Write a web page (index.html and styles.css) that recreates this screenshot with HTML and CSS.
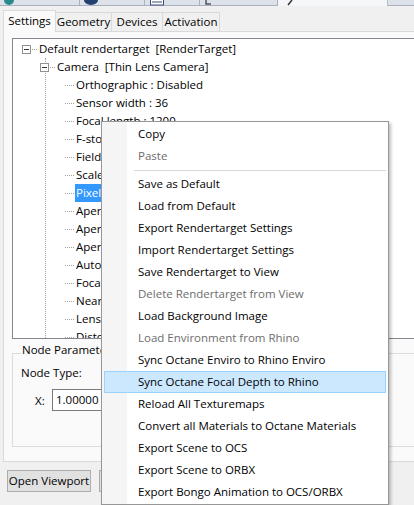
FILE: index.html
```html
<!DOCTYPE html>
<html>
<head>
<meta charset="utf-8">
<link rel="stylesheet" href="styles.css">
</head>
<body>
<div class="app">
  <div class="topstrip">
    <div class="ptab p1"><svg width="10" height="6" viewBox="0 0 10 6"><circle cx="5" cy="0" r="5" fill="#2a8a8a"/></svg></div>
    <div class="ptab p2"><svg width="14" height="6" viewBox="0 0 14 6"><ellipse cx="7" cy="0" rx="7" ry="5" fill="#23406e"/></svg></div>
    <div class="ptab p3"><svg width="14" height="6" viewBox="0 0 14 6"><rect x="0.5" y="-2" width="13" height="7" fill="#fff" stroke="#3a4d7a"/><line x1="2" y1="2" x2="12" y2="2" stroke="#3a4d7a"/></svg></div>
    <div class="ptab p4"><svg width="10" height="6" viewBox="0 0 10 6"><path d="M2 0 L2 4 L7 4" fill="none" stroke="#555" stroke-width="1.5"/></svg></div>
    <div class="ptab active"><svg width="10" height="6" viewBox="0 0 10 6"><path d="M2 5 L6 0" stroke="#333" stroke-width="1.5"/></svg></div>
    <div class="ptab rest"></div>
  </div>

  <div class="tabs">
    <div class="tab selected t1">Settings</div>
    <div class="tab t2">Geometry</div>
    <div class="tab t3">Devices</div>
    <div class="tab t4">Activation</div>
  </div>

  <div class="panel">
    <div class="tree">
      <div class="row root">
        <span class="exp"></span><span class="hdots d-root"></span><span class="label">Default rendertarget&nbsp; [RenderTarget]</span>
      </div>
      <div class="level1">
        <div class="row">
          <span class="exp exp1"></span><span class="hdots d-cam"></span><span class="label">Camera&nbsp; [Thin Lens Camera]</span>
        </div>
        <div class="row leaf"><span class="hdots d-leaf"></span><span class="label">Orthographic : Disabled</span></div>
        <div class="row leaf"><span class="hdots d-leaf"></span><span class="label">Sensor width : 36</span></div>
        <div class="row leaf"><span class="hdots d-leaf"></span><span class="label">Focal length : 1200</span></div>
        <div class="row leaf"><span class="hdots d-leaf"></span><span class="label">F-stop : 2.8</span></div>
        <div class="row leaf"><span class="hdots d-leaf"></span><span class="label">Field of view : 1.7</span></div>
        <div class="row leaf"><span class="hdots d-leaf"></span><span class="label">Scale of view : 1</span></div>
        <div class="row leaf"><span class="hdots d-leaf"></span><span class="label sel">Pixel aspect ratio : 1</span></div>
        <div class="row leaf"><span class="hdots d-leaf"></span><span class="label">Aperture : 0.5</span></div>
        <div class="row leaf"><span class="hdots d-leaf"></span><span class="label">Aperture edge : 1</span></div>
        <div class="row leaf"><span class="hdots d-leaf"></span><span class="label">Aperture blade count : 6</span></div>
        <div class="row leaf"><span class="hdots d-leaf"></span><span class="label">Autofocus : Enabled</span></div>
        <div class="row leaf"><span class="hdots d-leaf"></span><span class="label">Focal depth : 1.118</span></div>
        <div class="row leaf"><span class="hdots d-leaf"></span><span class="label">Near clip depth : 0</span></div>
        <div class="row leaf"><span class="hdots d-leaf"></span><span class="label">Lens shift : 0, 0</span></div>
        <div class="row leaf"><span class="hdots d-leaf"></span><span class="label">Distortion : 0</span></div>
      </div>
    </div>

    <div class="group">
      <div class="legend">Node Parameters</div>
      <div class="nodetype">Node Type:</div>
      <div class="xrow">
        <span class="xlabel">X:</span>
        <span class="input">1.00000</span>
      </div>
    </div>
  </div>

  <div class="buttons">
    <div class="btn b1">Open Viewport</div>
    <div class="btn b2">Close</div>
  </div>

  <div class="menu">
    <div class="item">Copy</div>
    <div class="item disabled">Paste</div>
    <div class="sep"></div>
    <div class="item">Save as Default</div>
    <div class="item">Load from Default</div>
    <div class="item">Export Rendertarget Settings</div>
    <div class="item">Import Rendertarget Settings</div>
    <div class="item">Save Rendertarget to View</div>
    <div class="item disabled">Delete Rendertarget from View</div>
    <div class="item">Load Background Image</div>
    <div class="item disabled">Load Environment from Rhino</div>
    <div class="item">Sync Octane Enviro to Rhino Enviro</div>
    <div class="item hover">Sync Octane Focal Depth to Rhino</div>
    <div class="item">Reload All Texturemaps</div>
    <div class="item">Convert all Materials to Octane Materials</div>
    <div class="item">Export Scene to OCS</div>
    <div class="item">Export Scene to ORBX</div>
    <div class="item">Export Bongo Animation to OCS/ORBX</div>
  </div>
</div>
</body>
</html>
```

FILE: styles.css
```css
* { box-sizing: border-box; }
html, body { margin: 0; padding: 0; }
body {
  background: #f0f0f0;
  font-family: "Open Sans", "Noto Sans", sans-serif;
  font-size: 11.5px;
  color: #000;
  width: 414px;
  height: 505px;
  overflow: hidden;
}
.app { position: relative; width: 414px; height: 505px; overflow: hidden; }

/* parent tab strip (cut off at top) */
.topstrip { display: flex; height: 6px; }
.ptab {
  height: 6px;
  background: #dce1ea;
  border-right: 1px solid #a9b0bf;
  border-bottom: 1px solid #a9b0bf;
  padding-left: 4px;
  display: flex;
  align-items: flex-start;
}
.ptab svg { display: block; }
.p1 { width: 80px; }
.p2 { width: 65px; }
.p3 { width: 55px; padding-left: 5px; }
.p4 { width: 78px; }
.ptab.active { width: 110px; background: #f5f6f7; border-bottom: none; border-right: 1px solid #b8bcc4; padding-left: 8px; }
.ptab.rest { flex: 1; border-right: none; }

/* settings tabs */
.tabs { display: flex; align-items: flex-end; margin-top: 3px; padding-left: 3px; height: 22px; }
.tab {
  height: 19px;
  border: 1px solid #d9d9d9;
  border-bottom: none;
  background: #f0f0f0;
  margin-left: -1px;
  line-height: 18px;
  text-align: center;
  white-space: nowrap;
}
.tab.selected {
  height: 22px;
  background: #fafafa;
  margin-left: 0;
  margin-bottom: -1px;
  position: relative;
  z-index: 1;
  line-height: 19px;
  border-color: #d9d9d9;
}
.t1 { width: 53px; }
.t2 { width: 57px; }
.t3 { width: 52px; }
.t4 { width: 58px; }

/* tab page */
.panel {
  margin-left: 3px;
  height: 431px;
  border: 1px solid #d9d9d9;
  border-right: none;
  background: #fafafa;
  padding: 6px 0 0 8px;
}
.tree {
  height: 301px;
  border: 1px solid #828790;
  border-right: none;
  background: #fff;
  overflow: hidden;
  padding-top: 1px;
}
.row { display: flex; align-items: center; height: 18px; white-space: nowrap; }
.root { padding-left: 9px; }
.exp {
  width: 9px; height: 9px;
  border: 1px solid #919191;
  background: #fff linear-gradient(#333, #333) no-repeat center / 5px 1px;
  flex: none;
}
.hdots { height: 1px; border-top: 1px dotted #a0a0a0; flex: none; }
.d-root { width: 5px; margin: 0 1px 0 1px; }
.level1 { margin-left: 32px; border-left: 1px dotted #a0a0a0; }
.exp1 { margin-left: -6px; }
.d-cam { width: 5px; margin: 0 1px 0 1px; }
.leaf { padding-left: 19px; }
.d-leaf { width: 9px; margin-right: 1px; }
.label { line-height: 18px; padding: 0 1px; }
.label.sel { background: #3399ff; color: #fff; }

/* group box */
.group {
  margin-top: 14px;
  height: 94px;
  border: 1px solid #dcdcdc;
  border-right: none;
  padding-left: 8px;
}
.legend {
  width: max-content;
  margin-top: -12px;
  background: #fafafa;
  padding: 0 1px;
  line-height: 16px;
}
.nodetype { line-height: 16px; margin-top: 7px; }
.xrow { display: flex; align-items: center; margin-top: 8px; padding-left: 14px; }
.xlabel { width: 17px; }
.input {
  display: block;
  width: 120px;
  height: 22px;
  border: 1px solid #7a7a7a;
  background: #fff;
  line-height: 20px;
  padding-left: 3px;
}

/* bottom buttons */
.buttons { display: flex; gap: 8px; padding: 8px 0 0 7px; }
.btn {
  height: 22px;
  border: 1px solid #adadad;
  background: #e1e1e1;
  line-height: 20px;
  text-align: center;
}
.b1 { width: 84px; }
.b2 { width: 80px; }

/* context menu overlay */
.menu {
  position: absolute;
  left: 101px;
  top: 121px;
  width: 288px;
  height: 384px;
  border: 1px solid #979797;
  background: linear-gradient(to right, #f5f5f5 0, #f5f5f5 25px, #fff 25px);
  padding: 1px 2px;
  box-shadow: 2px 2px 3px rgba(0,0,0,0.25);
}
.item {
  height: 22px;
  line-height: 20px;
  border: 1px solid transparent;
  padding-left: 33px;
  white-space: nowrap;
}
.item.disabled { color: #6d6d6d; }
.item.hover { background: #cce8ff; border-color: #99d1ff; }
.sep { height: 1px; background: #d7d7d7; margin: 3px 0 2px 30px; }
```
